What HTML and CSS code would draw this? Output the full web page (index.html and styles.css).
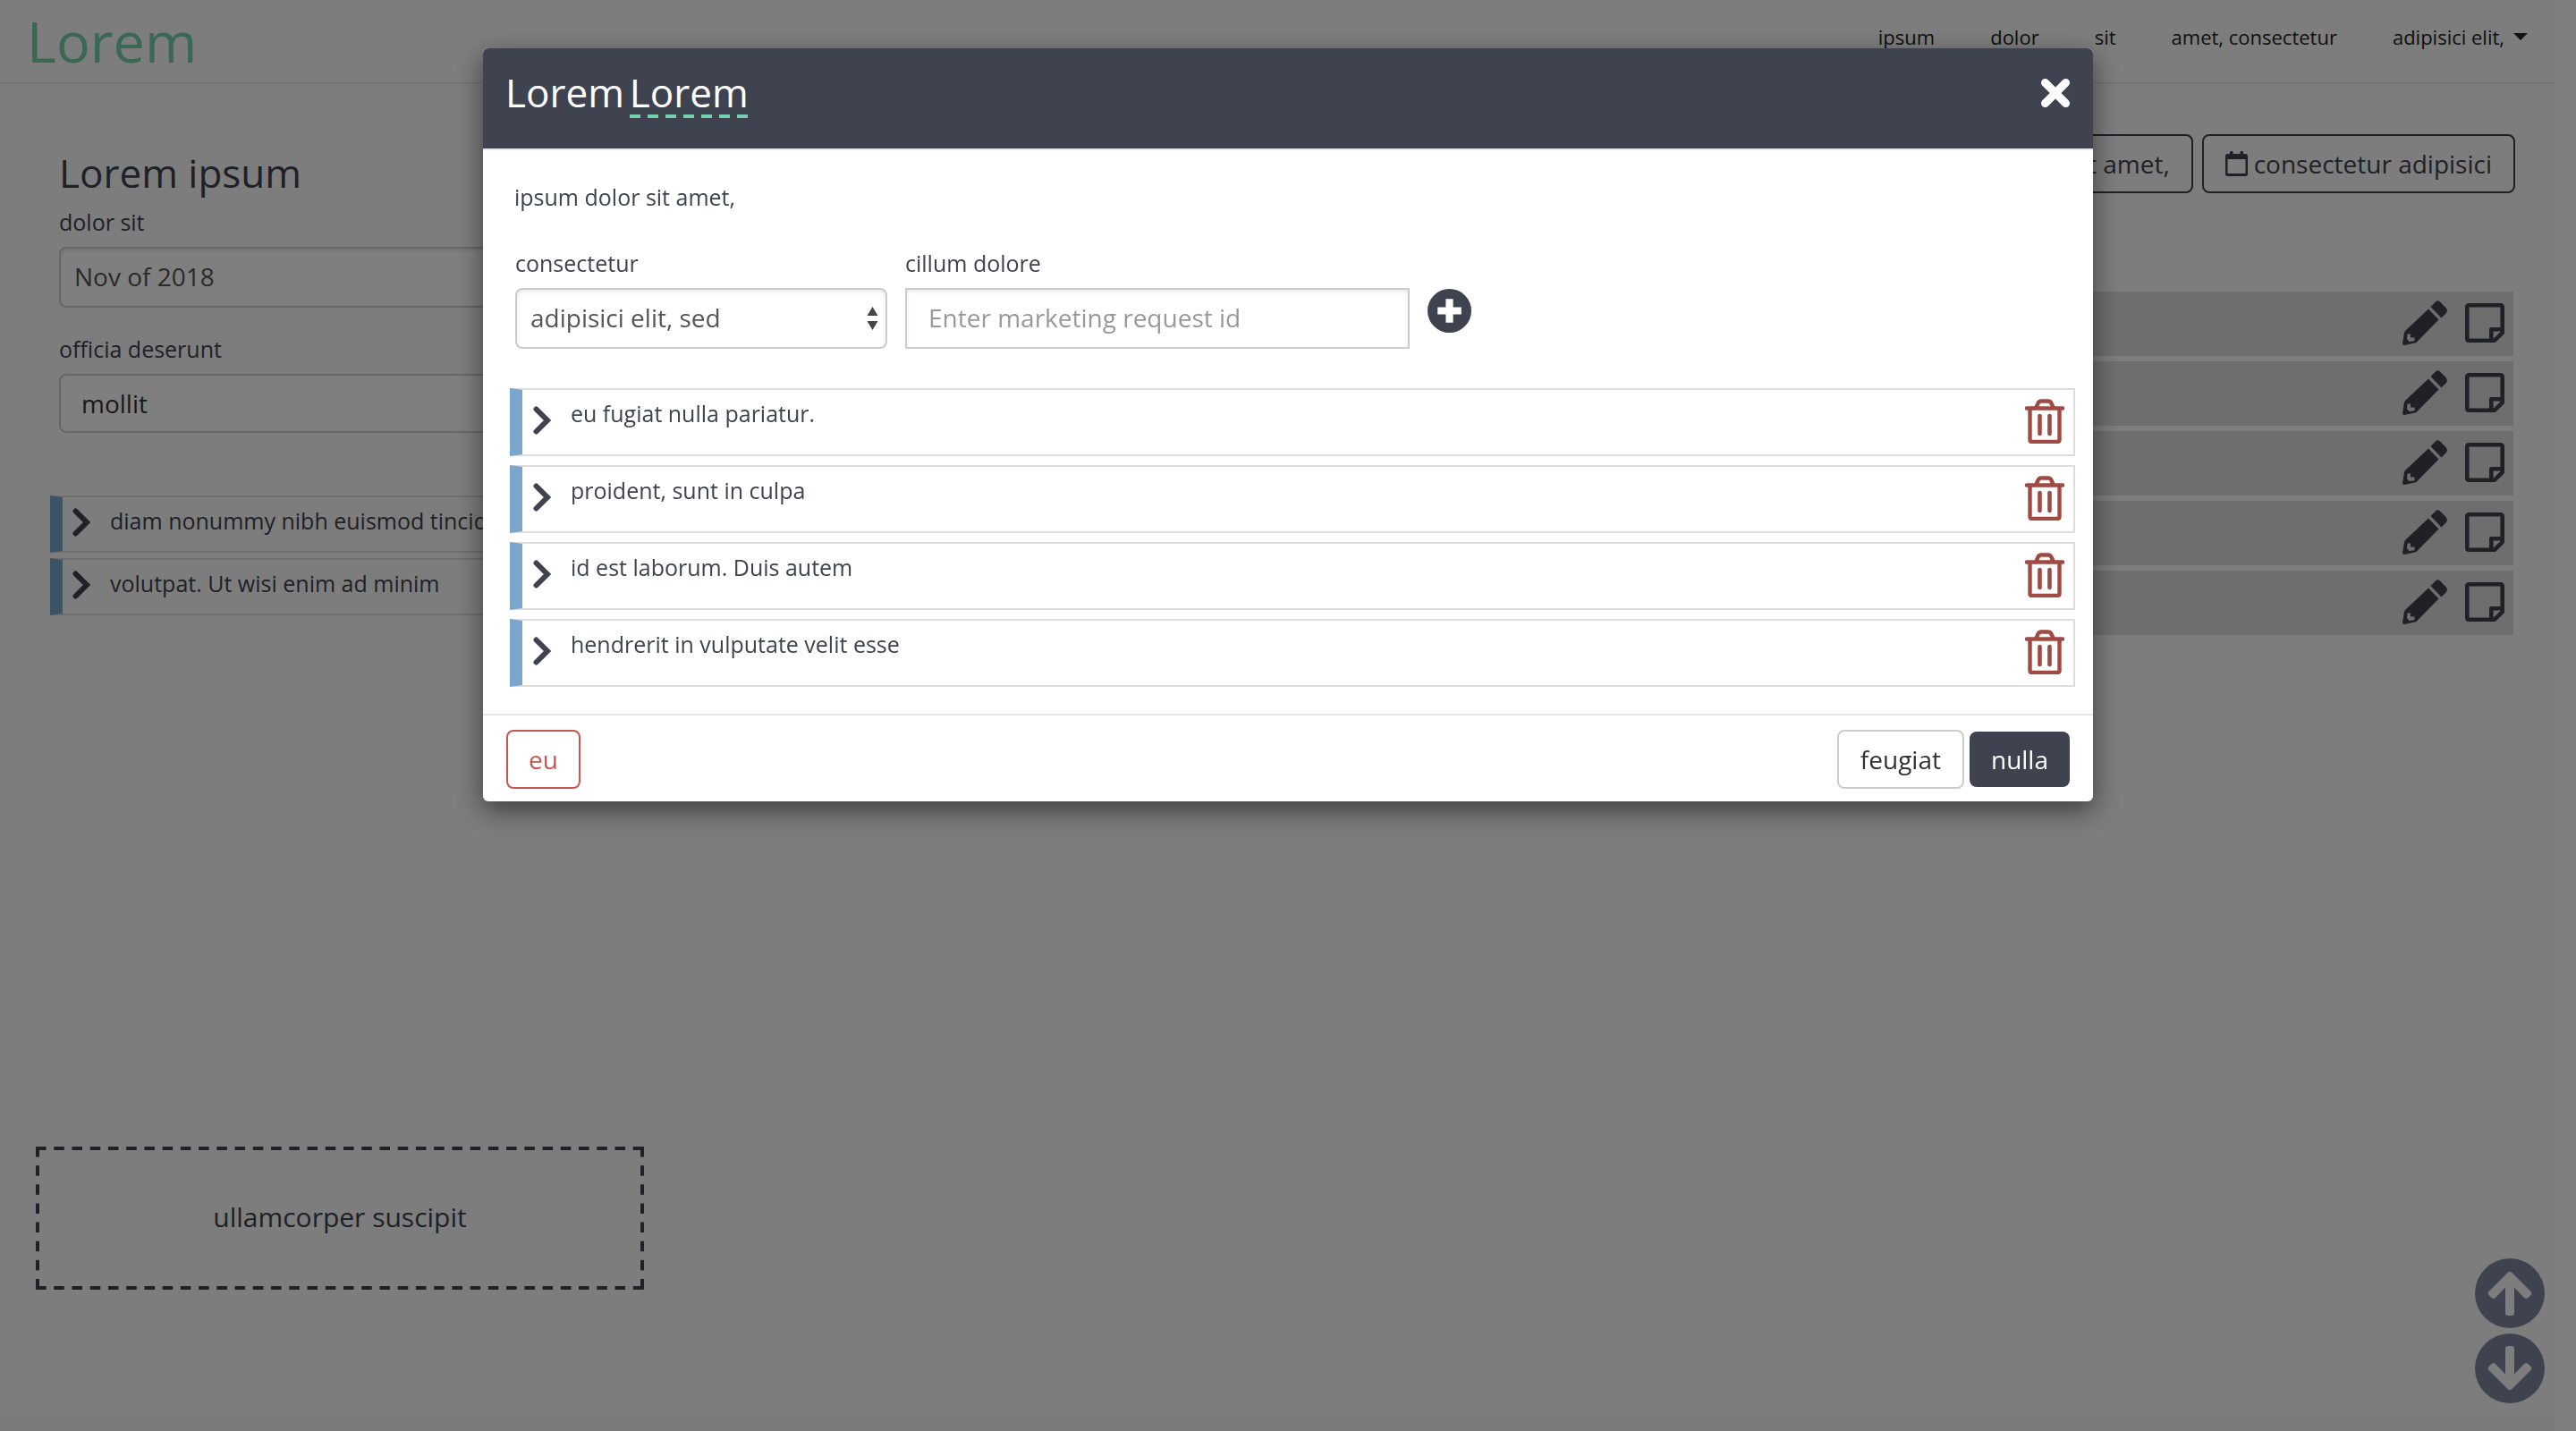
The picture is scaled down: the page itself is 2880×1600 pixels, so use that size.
FILE: index.html
```html
<!DOCTYPE html>
<html lang="en">
<head>
<meta charset="utf-8">
<title>Lorem</title>
<link rel="stylesheet" href="styles.css">
</head>
<body>
<svg class="sprite" aria-hidden="true">
  <symbol id="i-chevron" viewBox="0 0 20 32"><path d="M3.500 3.500 16 16 3.500 28.500" fill="none" stroke="currentColor" stroke-width="6" stroke-linecap="round" stroke-linejoin="miter"/></symbol>
  <symbol id="i-trash" viewBox="0 0 44 50"><path d="M2 10.500h40M12.500 9.500l2-4.500q1.200-2.500 3.500-2.500h8q2.300 0 3.500 2.500l2 4.500M5.500 11v34.500q0 2.500 2.500 2.500h28q2.500 0 2.500-2.500V11" fill="none" stroke="currentColor" stroke-width="4.400" stroke-linecap="round"/><path d="M16.500 19v20M27.500 19v20" fill="none" stroke="currentColor" stroke-width="4.600" stroke-linecap="round"/></symbol>
  <symbol id="i-pencil" viewBox="0 0 50 50"><path fill="currentColor" fill-rule="evenodd" d="M29 9.500 40.500 21.500 16 46.500q-.8.800-2 1L2 50Q0 50 0 48L2 36q.2-1.200 1-2zM5.500 37.500 5 43l2.500 3 6-.8V41.500H9V37.500z"/><path fill="currentColor" d="M31.500 7 37 1.500q2.500-2.500 5 0L48.500 8q2.500 3 .5 6l-5.500 5.500z"/></symbol>
  <symbol id="i-note" viewBox="0 0 44 44"><path fill="none" stroke="currentColor" stroke-width="4.600" stroke-linejoin="round" d="M4.500 2.300h35q2.200 0 2.200 2.200V33L33 41.700H4.500q-2.200 0-2.200-2.200v-35q0-2.200 2.200-2.200zM29.300 41V29.300H41"/></symbol>
  <symbol id="i-calendar" viewBox="0 0 25 28"><path fill="currentColor" fill-rule="evenodd" d="M5 3V1q0-1 1-1h1.500q1 0 1 1v2h8V1q0-1 1-1H19q1 0 1 1v2h2.500Q25 3 25 5.500v20q0 2.500-2.500 2.500h-20Q0 28 0 25.500v-20Q0 3 2.500 3zM2.500 9v16h20V9z"/></symbol>
  <symbol id="i-arrow" viewBox="0 0 78 78"><path fill="currentColor" fill-rule="evenodd" d="M39 0a39 39 0 1 0 0 78 39 39 0 0 0 0-78zM37 15.500q2-1.600 4 0L62.500 37q2 2 0 4L59.500 44q-2.200 2-4.500 0L44 32.500V61q0 3-3 3h-4q-3 0-3-3V32.500L23 44q-2.300 2-4.500 0L15.500 41q-2-2 0-4z"/></symbol>
</svg>

<div class="page">
  <header class="topbar">
    <a class="logo" href="#">Lorem</a>
    <nav class="nav">
      <a href="#">ipsum</a>
      <a href="#">dolor</a>
      <a href="#">sit</a>
      <a href="#">amet, consectetur</a>
      <a class="has-caret" href="#">adipisici elit,</a>
    </nav>
  </header>

  <main class="main">
    <section class="side">
      <div class="side-form">
        <h1>Lorem ipsum</h1>
        <label for="period">dolor sit</label>
        <select id="period" class="control"><option>Nov of 2018</option></select>
        <label class="spaced" for="kind">officia deserunt</label>
        <input id="kind" class="control dark" type="text" value="mollit">
      </div>
      <ul class="entries compact">
        <li class="entry"><svg class="chevron"><use href="#i-chevron"/></svg><span>diam nonummy nibh euismod tincidunt</span></li>
        <li class="entry"><svg class="chevron"><use href="#i-chevron"/></svg><span>volutpat. Ut wisi enim ad minim</span></li>
      </ul>
      <div class="dropzone">ullamcorper suscipit</div>
    </section>
    <section class="content">
      <div class="toolbar">
        <button class="btn outline" type="button">sit amet,</button>
        <button class="btn outline" type="button"><svg class="calendar"><use href="#i-calendar"/></svg>consectetur adipisici</button>
      </div>
      <ul class="bars">
        <li><button type="button" aria-label="Edit"><svg class="pencil"><use href="#i-pencil"/></svg></button><button type="button" aria-label="Note"><svg class="note"><use href="#i-note"/></svg></button></li>
        <li><button type="button" aria-label="Edit"><svg class="pencil"><use href="#i-pencil"/></svg></button><button type="button" aria-label="Note"><svg class="note"><use href="#i-note"/></svg></button></li>
        <li><button type="button" aria-label="Edit"><svg class="pencil"><use href="#i-pencil"/></svg></button><button type="button" aria-label="Note"><svg class="note"><use href="#i-note"/></svg></button></li>
        <li><button type="button" aria-label="Edit"><svg class="pencil"><use href="#i-pencil"/></svg></button><button type="button" aria-label="Note"><svg class="note"><use href="#i-note"/></svg></button></li>
        <li><button type="button" aria-label="Edit"><svg class="pencil"><use href="#i-pencil"/></svg></button><button type="button" aria-label="Note"><svg class="note"><use href="#i-note"/></svg></button></li>
      </ul>
    </section>
  </main>
  <footer class="foot"></footer>
</div>

<div class="jump">
  <button type="button" aria-label="Scroll up"><svg><use href="#i-arrow"/></svg></button>
  <button type="button" aria-label="Scroll down"><svg class="down"><use href="#i-arrow"/></svg></button>
</div>

<div class="overlay">
  <div class="modal" role="dialog" aria-labelledby="modal-title">
    <div class="modal-head">
      <h2 id="modal-title">Lorem <span class="editable">Lorem</span></h2>
      <button class="close" type="button" aria-label="Close"><svg viewBox="0 0 34 34"><path d="M5.500 5.500 28.500 28.500M28.500 5.500 5.500 28.500" stroke="currentColor" stroke-width="9" stroke-linecap="round"/></svg></button>
    </div>
    <div class="modal-body">
      <p class="intro"><b>ipsum</b> dolor sit amet,</p>
      <form class="add-form">
        <div class="field narrow">
          <label for="type">consectetur</label>
          <div class="select-wrap">
            <select id="type" class="control"><option>adipisici elit, sed</option></select>
            <svg class="updown" viewBox="0 0 12 26"><path fill="currentColor" d="M6 0 12 10H0zM6 26 0 16h12z"/></svg>
          </div>
        </div>
        <div class="field wide">
          <label for="request">cillum dolore</label>
          <input id="request" class="control square" type="text" placeholder="Enter marketing request id">
        </div>
        <button class="add" type="button" aria-label="Add"><svg viewBox="0 0 48 48"><circle cx="24" cy="24" r="24" fill="currentColor"/><path d="M24 11v26M11 24h26" stroke="#fff" stroke-width="8" stroke-linejoin="round"/></svg></button>
      </form>
      <ul class="entries">
        <li class="entry"><svg class="chevron"><use href="#i-chevron"/></svg><span>eu fugiat nulla pariatur.</span><button type="button" aria-label="Delete"><svg class="trash"><use href="#i-trash"/></svg></button></li>
        <li class="entry"><svg class="chevron"><use href="#i-chevron"/></svg><span>proident, sunt in culpa</span><button type="button" aria-label="Delete"><svg class="trash"><use href="#i-trash"/></svg></button></li>
        <li class="entry"><svg class="chevron"><use href="#i-chevron"/></svg><span>id est laborum. Duis autem</span><button type="button" aria-label="Delete"><svg class="trash"><use href="#i-trash"/></svg></button></li>
        <li class="entry"><svg class="chevron"><use href="#i-chevron"/></svg><span>hendrerit in vulputate velit esse</span><button type="button" aria-label="Delete"><svg class="trash"><use href="#i-trash"/></svg></button></li>
      </ul>
    </div>
    <div class="modal-foot">
      <button class="btn danger" type="button">eu</button>
      <div class="actions">
        <button class="btn plain" type="button">feugiat</button>
        <button class="btn primary" type="button">nulla</button>
      </div>
    </div>
  </div>
</div>
</body>
</html>
```

FILE: styles.css
```css
* { box-sizing: border-box; }

body {
  margin: 0;
  background: #fcfcfc;
  color: #3e434f;
  font: 25px/34px "Open Sans", sans-serif;
}

h1, h2, p, ul { margin: 0; padding: 0; font-weight: 400; }
ul { list-style: none; }
button, input, select { font: inherit; color: inherit; }
button { margin: 0; padding: 0; border: 0; background: none; }
svg { display: block; }
a { color: inherit; text-decoration: none; }
.sprite { position: absolute; width: 0; height: 0; }

/* Page */
.page {
  display: flex;
  flex-direction: column;
  min-height: 100vh;
  margin-right: 24px;
  background: #fafafa;
}
.topbar {
  display: flex;
  justify-content: space-between;
  align-items: flex-start;
  height: 94px;
  padding-left: 30px;
  border-bottom: 2px solid #e7e7e7;
}
.logo { color: #74d0ab; font-size: 63px; line-height: 92px; }
.nav { display: flex; color: #222; font-size: 22px; font-weight: 500; line-height: 82px; }
.nav a { padding: 0 30px 0 32px; }
.has-caret { display: flex; align-items: center; gap: 10px; }
.has-caret::after {
  content: "";
  border: 8px solid transparent;
  border-top-color: currentColor;
  border-bottom: 0;
}

.main { display: flex; flex: 1; padding: 0 46px 140px 40px; }
.side { display: flex; flex-direction: column; width: 680px; padding-top: 75px; }
.side-form { display: flex; flex-direction: column; padding: 0 26px; }
h1 { margin-bottom: 14px; font-size: 44px; line-height: 48px; }
label { display: block; margin-bottom: 11px; font-size: 25px; font-weight: 500; }
.side-form label.spaced { margin-top: 29px; }
.control {
  display: block;
  width: 100%;
  height: 68px;
  padding: 0 15px 2px;
  border: 2px solid #ccc;
  border-radius: 8px;
  background: #fff;
  box-shadow: inset 0 2px 4px rgba(0, 0, 0, .1);
  color: #555;
  font-size: 28px;
  appearance: none;
}
.control.dark { height: 66px; padding: 0 23px; box-shadow: none; color: #333; }
.control.square { padding: 0 24px 2px; border-radius: 0; }
.control::placeholder { color: #999; opacity: 1; }

.entries { display: flex; flex-direction: column; gap: 10px; }
.entry {
  display: flex;
  align-items: flex-start;
  height: 76px;
  padding: 9px 10px 0 12px;
  border: 2px solid #ddd;
  border-left: 14px solid #7aa6cc;
}
.entry span { flex: 1; white-space: nowrap; }
.chevron { width: 20px; height: 32px; margin: 9px 22px 0 0; color: #3e434f; }
.trash { width: 44px; height: 50px; margin-top: 1px; color: #a04a44; }
.compact { gap: 6px; margin: 70px 16px 0; }
.compact .entry { height: 64px; padding: 9px 11px 0; }
.compact .chevron { margin: 3px 22px 0 0; }

/* Dashes are 12px long; the calc spreads them so that one ends in each corner */
.dropzone {
  --h: linear-gradient(90deg, #3e434f 12px, transparent 12px);
  --v: linear-gradient(#3e434f 12px, transparent 12px);
  margin-top: auto;
  padding-bottom: 2px;
  background:
    var(--h) 0 0 / calc((100% - 12px) / 33) 4px repeat-x,
    var(--h) 0 100% / calc((100% - 12px) / 33) 4px repeat-x,
    var(--v) 0 0 / 4px calc((100% - 12px) / 7) repeat-y,
    var(--v) 100% 0 / 4px calc((100% - 12px) / 7) repeat-y;
  font-size: 30px;
  line-height: 158px;
  text-align: center;
}

.content { flex: 1; padding: 56px 0 0 40px; }
.toolbar { display: flex; justify-content: flex-end; gap: 10px; margin-right: -2px; }
.btn {
  display: flex;
  align-items: center;
  height: 66px;
  padding: 0 24px;
  border: 2px solid;
  border-radius: 8px;
  font-size: 28px;
}
.calendar { width: 25px; height: 28px; margin-right: 7px; }
.bars { display: flex; flex-direction: column; gap: 6px; margin-top: 110px; }
.bars li {
  display: flex;
  justify-content: flex-end;
  align-items: flex-start;
  gap: 20px;
  height: 72px;
  padding: 10px 10px 0;
  background: #ddd;
}
.pencil { width: 50px; height: 50px; }
.note { width: 44px; height: 44px; margin-top: 3px; }
.foot { height: 18px; background: #f7f7f7; }

.jump {
  position: fixed;
  right: 35px;
  bottom: 31px;
  display: flex;
  flex-direction: column;
  gap: 6px;
  color: #7c879f;
}
.jump svg { width: 78px; height: 78px; }
.jump .down { transform: rotate(180deg); }

/* Modal */
.overlay { position: fixed; inset: 0; padding: 54px 24px 0; background: rgba(0, 0, 0, .5); }
.modal {
  max-width: 1800px;
  margin: 0 auto;
  overflow: hidden;
  border-radius: 6px;
  background: #fff;
  box-shadow: 0 10px 30px rgba(0, 0, 0, .5);
}
.modal-head {
  display: flex;
  justify-content: space-between;
  padding: 16px 25px 30px;
  border-bottom: 2px solid #e9e9ec;
  background: #3e434f;
  background-clip: padding-box;
  color: #fff;
}
h2 { display: flex; align-items: baseline; gap: 6px; font-size: 44px; line-height: 66px; }
.editable {
  padding-bottom: 4px;
  background: repeating-linear-gradient(90deg, #76cfad 0 12px, transparent 12px 20px) 0 100% / 100% 4px no-repeat;
  line-height: 50px;
}
.close { align-self: center; padding-top: 2px; }
.close svg { width: 34px; height: 34px; }
.modal-body { padding: 35px 20px 30px 30px; }
.intro { padding-left: 5px; }
.intro b { font-weight: 500; }
.add-form { display: flex; gap: 20px; margin: 40px 0 44px; padding-left: 6px; }
.narrow { width: 416px; }
.wide { width: 564px; }
.select-wrap { position: relative; }
.updown { position: absolute; top: 21px; right: 10px; width: 13px; height: 26px; color: #444; pointer-events: none; }
.add { align-self: flex-start; margin-top: 46px; }
.add svg { width: 49px; height: 49px; }
.modal-foot {
  display: flex;
  justify-content: space-between;
  padding: 16px 26px 14px;
  border-top: 2px solid #e5e5e5;
}
.actions { display: flex; align-items: center; gap: 6px; }
.danger { padding: 0 23px; color: #c9564f; }
.plain { border-color: #ccc; color: #333; }
.primary { height: 62px; border: 0; background: #3e434f; color: #fff; font-weight: 500; }
```
